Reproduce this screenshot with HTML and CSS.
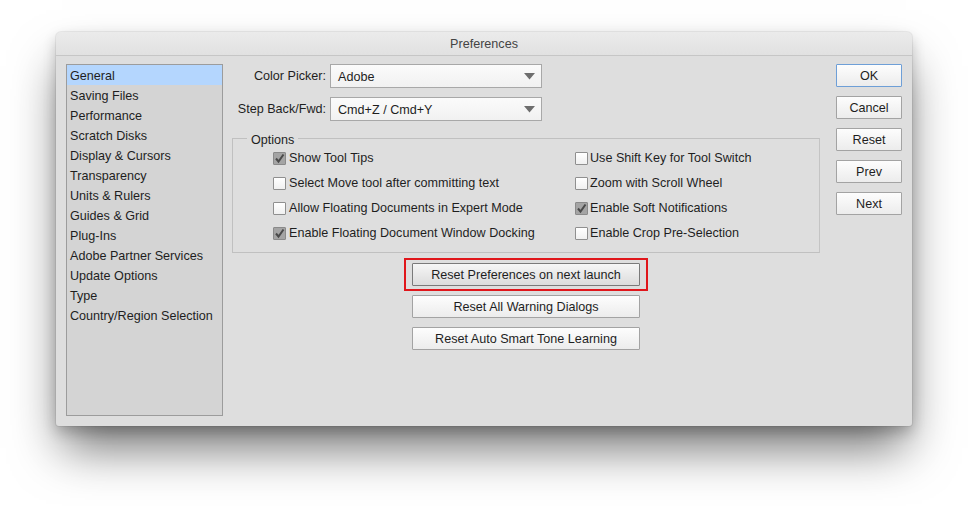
FILE: index.html
```html
<!DOCTYPE html>
<html>
<head>
<meta charset="utf-8">
<link rel="stylesheet" href="styles.css">
</head>
<body>
<div class="stage">
  <div class="window">
    <div class="titlebar">Preferences</div>
    <div class="content">
      <ul class="sidebar">
        <li class="selected">General</li>
        <li>Saving Files</li>
        <li>Performance</li>
        <li>Scratch Disks</li>
        <li>Display &amp; Cursors</li>
        <li>Transparency</li>
        <li>Units &amp; Rulers</li>
        <li>Guides &amp; Grid</li>
        <li>Plug-Ins</li>
        <li>Adobe Partner Services</li>
        <li>Update Options</li>
        <li>Type</li>
        <li>Country/Region Selection</li>
      </ul>
      <div class="main">
        <div class="fields">
          <div class="field">
            <span class="label">Color Picker:</span>
            <div class="select"><span class="value">Adobe</span><svg class="arrow" width="11" height="7" viewBox="0 0 11 7"><path d="M0 0 H11 L5.5 6.5 Z" fill="#6e6e6e"/></svg></div>
          </div>
          <div class="field">
            <span class="label">Step Back/Fwd:</span>
            <div class="select"><span class="value">Cmd+Z / Cmd+Y</span><svg class="arrow" width="11" height="7" viewBox="0 0 11 7"><path d="M0 0 H11 L5.5 6.5 Z" fill="#6e6e6e"/></svg></div>
          </div>
        </div>
        <div class="group">
          <span class="legend">Options</span>
          <div class="opts">
            <div class="col">
              <label class="cb"><span class="box checked"><svg width="11" height="11" viewBox="0 0 11 11"><path d="M2 5.5 L4.5 8.5 L9.5 1.5" stroke="#4a4a4a" stroke-width="2" fill="none"/></svg></span>Show Tool Tips</label>
              <label class="cb"><span class="box"></span>Select Move tool after committing text</label>
              <label class="cb"><span class="box"></span>Allow Floating Documents in Expert Mode</label>
              <label class="cb"><span class="box checked"><svg width="11" height="11" viewBox="0 0 11 11"><path d="M2 5.5 L4.5 8.5 L9.5 1.5" stroke="#4a4a4a" stroke-width="2" fill="none"/></svg></span>Enable Floating Document Window Docking</label>
            </div>
            <div class="col">
              <label class="cb"><span class="box"></span>Use Shift Key for Tool Switch</label>
              <label class="cb"><span class="box"></span>Zoom with Scroll Wheel</label>
              <label class="cb"><span class="box checked"><svg width="11" height="11" viewBox="0 0 11 11"><path d="M2 5.5 L4.5 8.5 L9.5 1.5" stroke="#4a4a4a" stroke-width="2" fill="none"/></svg></span>Enable Soft Notifications</label>
              <label class="cb"><span class="box"></span>Enable Crop Pre-Selection</label>
            </div>
          </div>
        </div>
        <div class="resets">
          <div class="highlight"><button class="btn wide">Reset Preferences on next launch</button></div>
          <button class="btn wide">Reset All Warning Dialogs</button>
          <button class="btn wide">Reset Auto Smart Tone Learning</button>
        </div>
      </div>
      <div class="actions">
        <button class="btn side default">OK</button>
        <button class="btn side">Cancel</button>
        <button class="btn side">Reset</button>
        <button class="btn side">Prev</button>
        <button class="btn side">Next</button>
      </div>
    </div>
  </div>
</div>
</body>
</html>
```

FILE: styles.css
```css
* { box-sizing: border-box; }
html, body { margin: 0; padding: 0; background: #ffffff; }
body {
  font-family: "Liberation Sans", Arial, sans-serif;
  font-size: 12.6px;
  color: #1e1e1e;
}
.stage {
  padding: 32px 56px 0 56px;
  width: 968px;
  height: 506px;
  overflow: hidden;
}
.window {
  width: 856px;
  height: 394px;
  background: #dedede;
  border-radius: 5px 5px 3px 3px;
  box-shadow: 0 0 0 1px rgba(0,0,0,0.06), 0 28px 46px -6px rgba(0,0,0,0.55), 0 6px 14px rgba(0,0,0,0.2);
  display: flex;
  flex-direction: column;
}
.titlebar {
  height: 24px;
  border-bottom: 1px solid #c6c6c6;
  background: linear-gradient(#ebebeb, #e1e1e1);
  border-radius: 5px 5px 0 0;
  text-align: center;
  padding-top: 4px;
  line-height: 17px;
  color: #444;
  font-size: 12.6px;
}
.content {
  flex: 1;
  display: flex;
  padding: 8px 10px 10px 10px;
}
.sidebar {
  list-style: none;
  margin: 0;
  padding: 0;
  width: 157px;
  height: 352px;
  background: #d4d4d4;
  border: 1px solid #9c9c9c;
}
.sidebar li {
  height: 20px;
  padding-top: 3px;
  line-height: 17px;
  padding-left: 3px;
  white-space: nowrap;
}
.sidebar li.selected { background: #b4d6fe; }

.main {
  width: 588px;
  margin-left: 9px;
  display: flex;
  flex-direction: column;
}
.fields {
  display: flex;
  flex-direction: column;
  gap: 9px;
}
.field {
  display: flex;
  align-items: center;
}
.label {
  width: 94px;
  text-align: right;
  margin-right: 4px;
  white-space: nowrap;
}
.select {
  width: 212px;
  height: 24px;
  border: 1px solid #a8a8a8;
  background: linear-gradient(#fbfbfb, #f1f1f1);
  display: flex;
  align-items: center;
  justify-content: space-between;
  padding: 0 6px 0 7px;
}
.value { padding-top: 2px; }
.arrow { margin-top: 1px; }

.group {
  position: relative;
  margin-top: 17px;
  height: 115px;
  border: 1px solid #c0c0c0;
  border-right-color: #c4c4c4;
}
.legend {
  position: absolute;
  top: -7px;
  left: 14px;
  padding: 0 4px;
  background: #dedede;
  line-height: 16px;
}
.opts {
  display: flex;
  padding: 11px 0 0 40px;
}
.col {
  display: flex;
  flex-direction: column;
  gap: 9px;
}
.col + .col { margin-left: 38px; }
.col:first-child { width: 264px; }
.cb {
  display: flex;
  align-items: center;
  height: 16px;
  white-space: nowrap;
}
.box {
  width: 13px;
  height: 13px;
  border: 1px solid #8f8f8f;
  background: linear-gradient(#ffffff, #f0f0f0);
  margin-right: 3px;
  display: flex;
  align-items: center;
  justify-content: center;
  border-radius: 1px;
}
.box.checked {
  background: #a4a4a4;
  border-color: #8a8a8a;
}
.col + .col .box { margin-right: 2px; }

.resets {
  display: flex;
  flex-direction: column;
  align-items: center;
  gap: 9px;
  margin-top: 10px;
}
.highlight {
  border: 2px solid #e0161b;
  padding: 3px 6px;
  margin-bottom: -5px;
  margin-top: -5px;
}
.btn {
  font-family: "Liberation Sans", Arial, sans-serif;
  font-size: 12.6px;
  color: #1e1e1e;
  height: 23px;
  border: 1px solid #a3a3a3;
  background: linear-gradient(#fdfdfd, #ececec);
  border-radius: 1px;
  padding: 0;
  display: flex;
  align-items: center;
  justify-content: center;
}
.btn.wide { width: 228px; }
.highlight .btn { border-color: #7a7a7a; background: linear-gradient(#f6f6f6, #dcdcdc); }
.actions {
  display: flex;
  flex-direction: column;
  gap: 9px;
  margin-left: 16px;
}
.btn.side { width: 66px; }
.btn.default { border-color: #6e9fd7; }
```
